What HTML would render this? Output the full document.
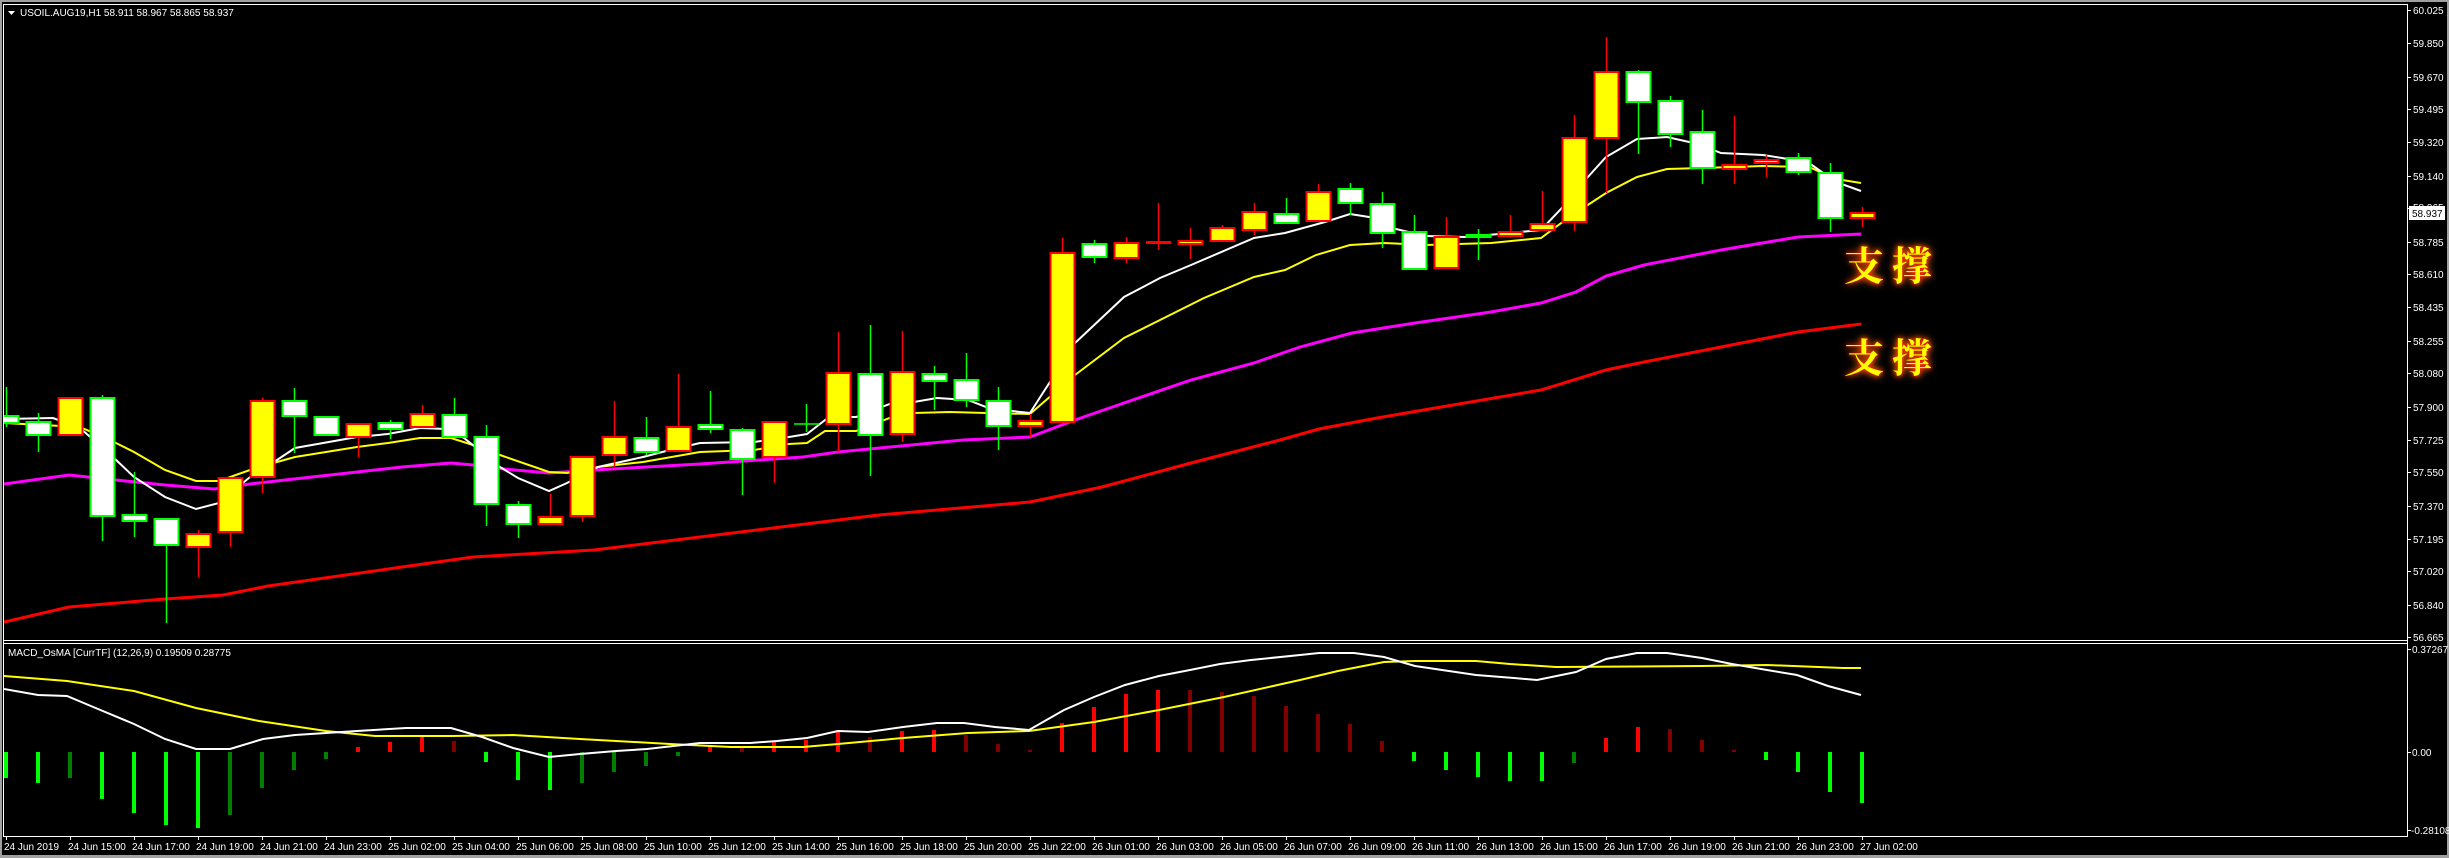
<!DOCTYPE html>
<html><head><meta charset="utf-8"><style>
html,body{margin:0;padding:0;background:#000;width:2449px;height:858px;overflow:hidden;position:relative}
svg{position:absolute;left:0;top:0}
text{font-family:"Liberation Sans",sans-serif;font-size:10px;fill:#fff}
.y{fill:#ff0;stroke:#f00;stroke-width:2}
.w{fill:#fff;stroke:#0f0;stroke-width:2}
.wr{stroke:#f00;stroke-width:1.5;fill:none}
.wg{stroke:#0f0;stroke-width:1.5;fill:none}
.zc{position:absolute;font-family:"Noto Serif CJK SC","Noto Sans CJK SC",serif;font-weight:bold;font-size:40px;line-height:44px;color:#ff0;letter-spacing:8px;text-shadow:0 0 3px #f00,0 0 6px #f40,0 0 9px #f80}
</style></head><body>
<svg width="2449" height="858" viewBox="0 0 2449 858" xmlns="http://www.w3.org/2000/svg">
<rect x="0" y="0" width="2449" height="858" fill="#000"/>
<!-- outer gray border -->
<rect x="0" y="0" width="2449" height="2" fill="#a0a0a0"/>
<rect x="0" y="0" width="2" height="858" fill="#a0a0a0"/>
<rect x="0" y="855" width="2449" height="3" fill="#a0a0a0"/>
<rect x="2447" y="0" width="2" height="858" fill="#a0a0a0"/>
<!-- frames -->
<g stroke="#fff" stroke-width="1" fill="none">
<path d="M3.5 4.5H2407.5V836.5H3.5Z"/>
<path d="M3.5 640.5H2407.5M3.5 643.5H2407.5"/>
</g>
<!-- header text -->
<path d="M8 11h7l-3.5 4z" fill="#fff"/>
<text x="20" y="16">USOIL.AUG19,H1  58.911 58.967 58.865 58.937</text>
<text x="8" y="656">MACD_OsMA [CurrTF] (12,26,9) 0.19509 0.28775</text>

<!-- main chart clip -->
<defs><clipPath id="cm"><rect x="4" y="5" width="2403" height="635"/></clipPath>
<clipPath id="cd"><rect x="4" y="644" width="2403" height="192"/></clipPath></defs>

<g clip-path="url(#cm)">
<!-- MAs -->
<polyline fill="none" stroke="#f00" stroke-width="3" points="4,622 69,607 165,599 223,595 268,586 402,567 473,557 594,550 700,537 789,526 879,515 1030,502 1102,487 1191,463 1280,440 1319,429 1377,418 1453,405 1541,390 1606,370 1644,362 1721,347 1798,332 1861,324"/>
<polyline fill="none" stroke="#f0f" stroke-width="3" points="4,484 69,475 116,480 165,485 214,489 250,484 312,477 402,467 451,463 473,465 504,469 549,473 594,470 700,464 803,457 838,452 963,440 1030,437 1075,420 1124,403 1191,380 1254,363 1300,347 1352,333 1415,323 1491,312 1541,303 1576,292 1606,276 1644,265 1721,250 1798,237 1861,234"/>
<polyline fill="none" stroke="#ff0" stroke-width="2" points="4,423 80,427 116,443 134,452 165,470 196,481 219,481 250,470 277,462 295,457 357,447 388,443 420,438 451,438 473,445 500,455 549,472 567,473 598,467 643,462 700,452 754,450 789,444 807,443 825,431 856,431 892,417 914,413 950,412 986,413 1030,414 1075,375 1124,338 1160,320 1204,298 1254,277 1285,270 1316,255 1350,245 1384,243 1426,245 1491,243 1541,238 1568,218 1606,193 1637,177 1667,169 1702,168 1763,166 1809,167 1836,179 1861,183"/>
<polyline fill="none" stroke="#fff" stroke-width="2" points="4,419 53,418 80,428 114,458 134,477 165,497 196,509 219,503 250,477 277,460 295,448 357,437 388,434 420,428 446,429 464,438 500,467 518,478 549,491 567,483 598,467 643,457 670,450 700,443 754,442 789,437 807,434 829,417 856,417 892,403 914,402 937,398 968,400 986,407 1012,411 1030,413 1075,343 1124,297 1160,278 1191,265 1254,238 1285,233 1325,222 1350,214 1369,217 1396,229 1426,236 1465,237 1499,234 1541,230 1560,210 1587,178 1606,157 1637,139 1667,137 1698,144 1721,153 1763,155 1782,158 1809,163 1836,182 1861,191"/>

<!-- candles -->
<path class="wg" d="M6.5 387V427"/><rect class="w" x="-5.5" y="416" width="24" height="7"/>
<path class="wg" d="M38.5 413V452"/><rect class="w" x="26.5" y="422" width="24" height="13"/>
<path class="wr" d="M70.5 397V435"/><rect class="y" x="58.5" y="398" width="24" height="37"/>
<path class="wg" d="M102.5 395V541"/><rect class="w" x="90.5" y="398" width="24" height="118"/>
<path class="wg" d="M134.5 472V537"/><rect class="w" x="122.5" y="515" width="24" height="6"/>
<path class="wg" d="M166.5 518V623"/><rect class="w" x="154.5" y="519" width="24" height="26"/>
<path class="wr" d="M198.5 530V577"/><rect class="y" x="186.5" y="534" width="24" height="13"/>
<path class="wr" d="M230.5 477V547"/><rect class="y" x="218.5" y="478" width="24" height="54"/>
<path class="wr" d="M262.5 398V493"/><rect class="y" x="250.5" y="401" width="24" height="76"/>
<path class="wg" d="M294.5 388V453"/><rect class="w" x="282.5" y="401" width="24" height="15"/>
<path class="wg" d="M326.5 416V435"/><rect class="w" x="314.5" y="417" width="24" height="18"/>
<path class="wr" d="M358.5 424V457"/><rect class="y" x="346.5" y="424" width="24" height="13"/>
<path class="wg" d="M390.5 420V439"/><rect class="w" x="378.5" y="423" width="24" height="6"/>
<path class="wr" d="M422.5 405V427"/><rect class="y" x="410.5" y="414" width="24" height="13"/>
<path class="wg" d="M454.5 398V437"/><rect class="w" x="442.5" y="415" width="24" height="22"/>
<path class="wg" d="M486.5 425V526"/><rect class="w" x="474.5" y="437" width="24" height="67"/>
<path class="wg" d="M518.5 501V538"/><rect class="w" x="506.5" y="505" width="24" height="19"/>
<path class="wr" d="M550.5 494V524"/><rect class="y" x="538.5" y="517" width="24" height="7"/>
<path class="wr" d="M582.5 457V522"/><rect class="y" x="570.5" y="457" width="24" height="59"/>
<path class="wr" d="M614.5 401V467"/><rect class="y" x="602.5" y="437" width="24" height="18"/>
<path class="wg" d="M646.5 417V455"/><rect class="w" x="634.5" y="438" width="24" height="14"/>
<path class="wr" d="M678.5 374V451"/><rect class="y" x="666.5" y="427" width="24" height="24"/>
<path class="wg" d="M710.5 391V433"/><rect class="w" x="698.5" y="425" width="24" height="4"/>
<path class="wg" d="M742.5 428V495"/><rect class="w" x="730.5" y="430" width="24" height="29"/>
<path class="wr" d="M774.5 422V483"/><rect class="y" x="762.5" y="422" width="24" height="35"/>
<path class="wg" d="M806.5 404V432M794 424H819"/>
<path class="wr" d="M838.5 332V452"/><rect class="y" x="826.5" y="373" width="24" height="51"/>
<path class="wg" d="M870.5 325V476"/><rect class="w" x="858.5" y="374" width="24" height="61"/>
<path class="wr" d="M902.5 331V442"/><rect class="y" x="890.5" y="372" width="24" height="62"/>
<path class="wg" d="M934.5 366V410"/><rect class="w" x="922.5" y="374" width="24" height="7"/>
<path class="wg" d="M966.5 353V407"/><rect class="w" x="954.5" y="380" width="24" height="20"/>
<path class="wg" d="M998.5 387V450"/><rect class="w" x="986.5" y="401" width="24" height="25"/>
<path class="wr" d="M1030.5 414V437"/><rect class="y" x="1018.5" y="421" width="24" height="5"/>
<path class="wr" d="M1062.5 238V422"/><rect class="y" x="1050.5" y="253" width="24" height="169"/>
<path class="wg" d="M1094.5 240V263"/><rect class="w" x="1082.5" y="244" width="24" height="13"/>
<path class="wr" d="M1126.5 237V263"/><rect class="y" x="1114.5" y="243" width="24" height="15"/>
<path class="wr" d="M1158.5 203V250" /><path d="M1146 242.5H1171" stroke="#f00" stroke-width="3"/>
<path class="wr" d="M1190.5 228V259"/><rect class="y" x="1178.5" y="241" width="24" height="3"/>
<path class="wr" d="M1222.5 225V241"/><rect class="y" x="1210.5" y="228" width="24" height="13"/>
<path class="wr" d="M1254.5 203V235"/><rect class="y" x="1242.5" y="212" width="24" height="18"/>
<path class="wg" d="M1286.5 198V223"/><rect class="w" x="1274.5" y="214" width="24" height="9"/>
<path class="wr" d="M1318.5 184V221"/><rect class="y" x="1306.5" y="192" width="24" height="29"/>
<path class="wg" d="M1350.5 183V215"/><rect class="w" x="1338.5" y="189" width="24" height="14"/>
<path class="wg" d="M1382.5 192V248"/><rect class="w" x="1370.5" y="204" width="24" height="29"/>
<path class="wg" d="M1414.5 215V269"/><rect class="w" x="1402.5" y="232" width="24" height="37"/>
<path class="wr" d="M1446.5 217V268"/><rect class="y" x="1434.5" y="237" width="24" height="31"/>
<path class="wg" d="M1478.5 229V260"/><rect class="w" x="1466.5" y="235" width="24" height="2"/>
<path class="wr" d="M1510.5 215V238"/><rect class="y" x="1498.5" y="232" width="24" height="4"/>
<path class="wr" d="M1542.5 191V230"/><rect class="y" x="1530.5" y="224" width="24" height="6"/>
<path class="wr" d="M1574.5 115V231"/><rect class="y" x="1562.5" y="138" width="24" height="84"/>
<path class="wr" d="M1606.5 37V193"/><rect class="y" x="1594.5" y="72" width="24" height="66"/>
<path class="wg" d="M1638.5 70V154"/><rect class="w" x="1626.5" y="72" width="24" height="30"/>
<path class="wg" d="M1670.5 96V147"/><rect class="w" x="1658.5" y="101" width="24" height="33"/>
<path class="wg" d="M1702.5 110V184"/><rect class="w" x="1690.5" y="132" width="24" height="36"/>
<path class="wr" d="M1734.5 116V184"/><rect class="y" x="1722.5" y="165" width="24" height="4"/>
<path class="wr" d="M1766.5 155V177"/><rect class="y" x="1754.5" y="160" width="24" height="3"/>
<path class="wg" d="M1798.5 153V175"/><rect class="w" x="1786.5" y="158" width="24" height="14"/>
<path class="wg" d="M1830.5 163V232"/><rect class="w" x="1818.5" y="173" width="24" height="45"/>
<path class="wr" d="M1862.5 207V227"/><rect class="y" x="1850.5" y="213" width="24" height="5"/>
</g>

<!-- price scale -->
<g stroke="#fff" stroke-width="1">
<path d="M2408 10.5h3M2408 43.5h3M2408 77.5h3M2408 109.5h3M2408 142.5h3M2408 176.5h3M2408 208.5h3M2408 242.5h3M2408 274.5h3M2408 307.5h3M2408 341.5h3M2408 373.5h3M2408 407.5h3M2408 440.5h3M2408 472.5h3M2408 506.5h3M2408 539.5h3M2408 571.5h3M2408 605.5h3M2408 637.5h3"/>
</g>
<g>
<text x="2413" y="14">60.025</text>
<text x="2413" y="47">59.850</text>
<text x="2413" y="81">59.670</text>
<text x="2413" y="113">59.495</text>
<text x="2413" y="146">59.320</text>
<text x="2413" y="180">59.140</text>
<text x="2413" y="211">58.965</text>
<text x="2413" y="246">58.785</text>
<text x="2413" y="278">58.610</text>
<text x="2413" y="311">58.435</text>
<text x="2413" y="345">58.255</text>
<text x="2413" y="377">58.080</text>
<text x="2413" y="411">57.900</text>
<text x="2413" y="444">57.725</text>
<text x="2413" y="476">57.550</text>
<text x="2413" y="510">57.370</text>
<text x="2413" y="543">57.195</text>
<text x="2413" y="575">57.020</text>
<text x="2413" y="609">56.840</text>
<text x="2413" y="641">56.665</text>
</g>
<rect x="2409" y="206" width="36" height="14" fill="#fff"/>
<text x="2412" y="217" style="fill:#000">58.937</text>

<!-- MACD -->
<g clip-path="url(#cd)">
<path stroke="#00ff00" stroke-width="4" d="M6 752V778M38 752V783M102 752V799M134 752V813M166 752V825M198 752V828M486 752V762M518 752V780M550 752V790M1414 752V761M1446 752V770M1478 752V777M1510 752V781M1542 752V781M1766 752V760M1798 752V772M1830 752V792M1862 752V803"/>
<path stroke="#008000" stroke-width="4" d="M70 752V778M230 752V815M262 752V788M294 752V770M326 752V759M582 752V783M614 752V772M646 752V766M678 752V756M1574 752V763"/>
<path stroke="#ff0000" stroke-width="4" d="M358 752V747M390 752V742M422 752V737M710 752V747M774 752V742M806 752V740M838 752V730M902 752V731M934 752V730M1062 752V723M1094 752V707M1126 752V694M1158 752V690M1606 752V738M1638 752V727"/>
<path stroke="#800000" stroke-width="4" d="M454 752V741M742 752V748M870 752V737M966 752V735M998 752V744M1030 752V750M1190 752V690M1222 752V692M1254 752V696M1286 752V706M1318 752V714M1350 752V724M1382 752V741M1670 752V729M1702 752V740M1734 752V750"/>
<polyline fill="none" stroke="#ff0" stroke-width="2" points="4,676 67,681 134,691 196,708 259,721 326,731 375,736 451,736 513,735 580,739 670,744 731,747 803,747 838,744 903,738 968,733 1029,731 1094,722 1159,710 1224,697 1300,680 1338,671 1384,662 1415,661 1476,661 1510,664 1556,667 1702,666 1767,665 1843,668 1861,668"/>
<polyline fill="none" stroke="#fff" stroke-width="2" points="4,689 38,695 67,696 98,709 134,724 165,739 196,749 230,749 263,739 295,735 357,731 406,728 451,728 482,737 513,748 549,757 580,754 616,751 647,749 700,743 750,743 777,741 807,738 838,731 868,732 903,727 937,723 964,723 995,727 1029,730 1064,710 1094,697 1125,685 1159,676 1190,670 1220,664 1251,660 1300,655 1319,653 1354,653 1384,657 1415,666 1476,675 1514,678 1537,680 1576,672 1606,659 1637,653 1667,653 1702,658 1732,664 1767,670 1797,675 1828,686 1861,695"/>
</g>
<g stroke="#fff"><path d="M2408 649.5h3M2408 752.5h3M2408 830.5h3"/></g>
<text x="2412" y="653">0.37267</text>
<text x="2412" y="756">0.00</text>
<text x="2411" y="834">-0.28108</text>

<!-- time axis -->
<g stroke="#fff" stroke-width="1"><path d="M6.5 836v4M70.5 836v4M134.5 836v4M198.5 836v4M262.5 836v4M326.5 836v4M390.5 836v4M454.5 836v4M518.5 836v4M582.5 836v4M646.5 836v4M710.5 836v4M774.5 836v4M838.5 836v4M902.5 836v4M966.5 836v4M1030.5 836v4M1094.5 836v4M1158.5 836v4M1222.5 836v4M1286.5 836v4M1350.5 836v4M1414.5 836v4M1478.5 836v4M1542.5 836v4M1606.5 836v4M1670.5 836v4M1734.5 836v4M1798.5 836v4M1862.5 836v4"/></g>
<g>
<text x="4" y="850">24 Jun 2019</text>
<text x="68" y="850">24 Jun 15:00</text>
<text x="132" y="850">24 Jun 17:00</text>
<text x="196" y="850">24 Jun 19:00</text>
<text x="260" y="850">24 Jun 21:00</text>
<text x="324" y="850">24 Jun 23:00</text>
<text x="388" y="850">25 Jun 02:00</text>
<text x="452" y="850">25 Jun 04:00</text>
<text x="516" y="850">25 Jun 06:00</text>
<text x="580" y="850">25 Jun 08:00</text>
<text x="644" y="850">25 Jun 10:00</text>
<text x="708" y="850">25 Jun 12:00</text>
<text x="772" y="850">25 Jun 14:00</text>
<text x="836" y="850">25 Jun 16:00</text>
<text x="900" y="850">25 Jun 18:00</text>
<text x="964" y="850">25 Jun 20:00</text>
<text x="1028" y="850">25 Jun 22:00</text>
<text x="1092" y="850">26 Jun 01:00</text>
<text x="1156" y="850">26 Jun 03:00</text>
<text x="1220" y="850">26 Jun 05:00</text>
<text x="1284" y="850">26 Jun 07:00</text>
<text x="1348" y="850">26 Jun 09:00</text>
<text x="1412" y="850">26 Jun 11:00</text>
<text x="1476" y="850">26 Jun 13:00</text>
<text x="1540" y="850">26 Jun 15:00</text>
<text x="1604" y="850">26 Jun 17:00</text>
<text x="1668" y="850">26 Jun 19:00</text>
<text x="1732" y="850">26 Jun 21:00</text>
<text x="1796" y="850">26 Jun 23:00</text>
<text x="1860" y="850">27 Jun 02:00</text>
</g>
</svg>
<div class="zc" style="left:1844px;top:242px">支撑</div>
<div class="zc" style="left:1844px;top:334px">支撑</div>
</body></html>
